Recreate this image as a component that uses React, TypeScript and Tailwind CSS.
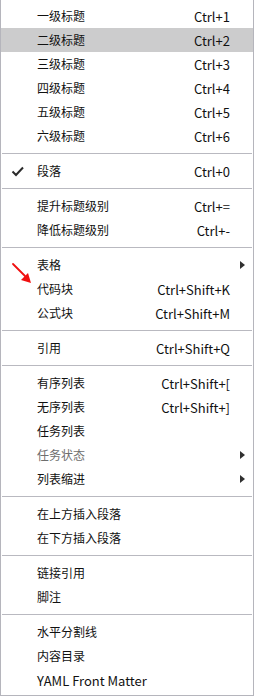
import React from 'react';

type Item =
  | { type: 'sep' }
  | {
      type?: 'item';
      label: string;
      shortcut?: string;
      checked?: boolean;
      active?: boolean;
      disabled?: boolean;
      submenu?: boolean;
      arrow?: boolean;
      latin?: boolean;
    };

const items: Item[] = [
  { label: '一级标题', shortcut: 'Ctrl+1' },
  { label: '二级标题', shortcut: 'Ctrl+2', active: true },
  { label: '三级标题', shortcut: 'Ctrl+3' },
  { label: '四级标题', shortcut: 'Ctrl+4' },
  { label: '五级标题', shortcut: 'Ctrl+5' },
  { label: '六级标题', shortcut: 'Ctrl+6' },
  { type: 'sep' },
  { label: '段落', shortcut: 'Ctrl+0', checked: true },
  { type: 'sep' },
  { label: '提升标题级别', shortcut: 'Ctrl+=' },
  { label: '降低标题级别', shortcut: 'Ctrl+-' },
  { type: 'sep' },
  { label: '表格', submenu: true },
  { label: '代码块', shortcut: 'Ctrl+Shift+K', arrow: true },
  { label: '公式块', shortcut: 'Ctrl+Shift+M' },
  { type: 'sep' },
  { label: '引用', shortcut: 'Ctrl+Shift+Q' },
  { type: 'sep' },
  { label: '有序列表', shortcut: 'Ctrl+Shift+[' },
  { label: '无序列表', shortcut: 'Ctrl+Shift+]' },
  { label: '任务列表' },
  { label: '任务状态', submenu: true, disabled: true },
  { label: '列表缩进', submenu: true },
  { type: 'sep' },
  { label: '在上方插入段落' },
  { label: '在下方插入段落' },
  { type: 'sep' },
  { label: '链接引用' },
  { label: '脚注' },
  { type: 'sep' },
  { label: '水平分割线' },
  { label: '内容目录' },
  { label: 'YAML Front Matter', latin: true },
];

const CheckMark = () => (
  <svg width="14" height="14" viewBox="0 0 14 14" className="ml-[10px]">
    <path d="M1.5 7.5 L5 11 L12 3.5" fill="none" stroke="#2b2b2b" strokeWidth="2" />
  </svg>
);

// red annotation arrow pointing at the code block entry
const RedArrow = () => (
  <svg
    width="24"
    height="24"
    viewBox="0 0 24 24"
    className="absolute left-[9px] top-[-15px] pointer-events-none"
  >
    <path d="M3 2 L15 14" stroke="#f01010" strokeWidth="1.8" strokeLinecap="round" />
    <path d="M11 18 L18 11 L21 21 Z" fill="#f01010" />
  </svg>
);

const MenuRow: React.FC<{ item: Exclude<Item, { type: 'sep' }> }> = ({ item }) => (
  <div
    className={`relative flex items-center h-[24px] ${
      item.active ? 'bg-[#cccccd]' : ''
    } ${item.disabled ? 'text-[#6e6e6e]' : 'text-[#111111]'}`}
  >
    <div className="w-[36px] flex items-center">{item.checked && <CheckMark />}</div>
    {item.arrow && <RedArrow />}
    <span className={`flex-1 whitespace-nowrap ${item.latin ? 'text-[13px]' : ''}`}>
      {item.label}
    </span>
    {item.shortcut && <span className="whitespace-nowrap text-[13px]">{item.shortcut}</span>}
    <div className="w-[23px] flex items-center">
      {item.submenu && (
        <div className="ml-[10px] w-0 h-0 border-y-[4px] border-y-transparent border-l-[5px] border-l-[#303030]" />
      )}
    </div>
  </div>
);

export default function App() {
  return (
    <div
      className="w-[254px] h-[696px] bg-white border-x border-b border-[#b5b5bc] pt-[4px] pb-[3px] text-[12px] leading-none"
      style={{ fontFamily: '"Noto Sans CJK SC", sans-serif' }}
    >
      {items.map((item, i) =>
        item.type === 'sep' ? (
          <div key={i} className="h-[11px] flex items-center px-px">
            <div className="h-px w-full bg-[#b9b9c0]" />
          </div>
        ) : (
          <MenuRow key={i} item={item} />
        )
      )}
    </div>
  );
}
